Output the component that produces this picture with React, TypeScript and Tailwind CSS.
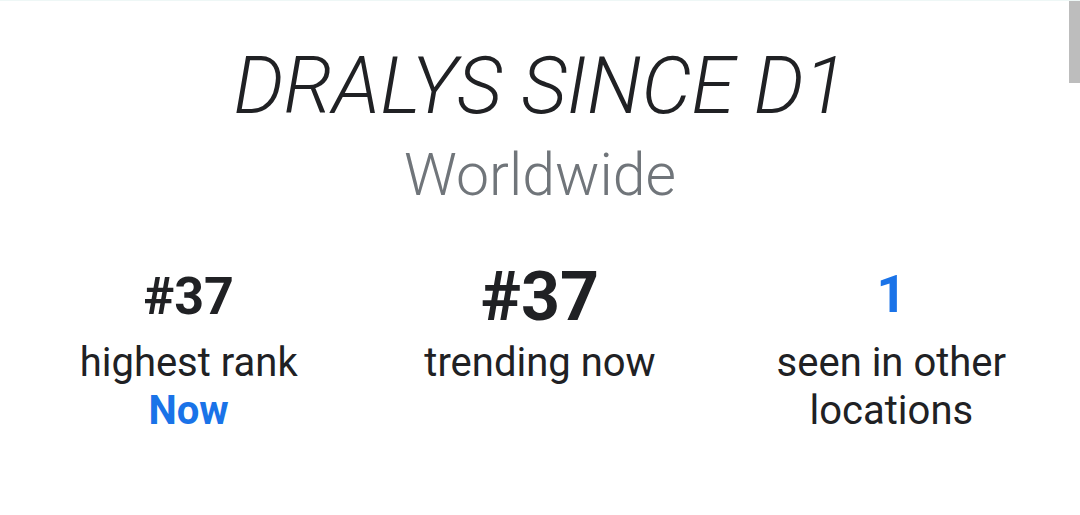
import React from 'react';

const font = { fontFamily: 'Roboto, "Noto Sans", Arial, sans-serif' };

export default function App() {
  return (
    <div className="relative w-[1080px] h-[515px] bg-white overflow-hidden border-t border-[#eef7f6]" style={font}>
      {/* scroll thumb */}
      <div className="absolute right-0 top-0 w-[11px] h-[82px] bg-[#bdbdbd]" />

      <div className="flex flex-col items-center pt-[40px]">
        <h1 className="text-[79px] leading-[90px] font-light italic text-[#202124]">
          DRALYS SINCE D1
        </h1>
        <p className="mt-[12px] text-[59px] leading-[64px] font-light text-[#70757a]">Worldwide</p>
      </div>

      <div className="grid grid-cols-3 px-[13px] mt-[55px] text-[#202124]">
        <div className="flex flex-col items-center">
          <span className="mt-[5px] text-[52px] leading-[60px] font-bold">#37</span>
          <span className="mt-[12px] text-[40px] leading-[48px]">highest rank</span>
          <span className="text-[40px] leading-[48px] font-bold text-[#1a73e8]">Now</span>
        </div>
        <div className="flex flex-col items-center">
          <span className="text-[68px] leading-[70px] font-bold">#37</span>
          <span className="mt-[7px] text-[40px] leading-[48px]">trending now</span>
        </div>
        <div className="flex flex-col items-center">
          <span className="mt-[3px] text-[52px] leading-[60px] font-bold text-[#1a73e8]">1</span>
          <span className="mt-[14px] text-[40px] leading-[48px] text-center">
            seen in other
            <br />
            locations
          </span>
        </div>
      </div>
    </div>
  );
}
